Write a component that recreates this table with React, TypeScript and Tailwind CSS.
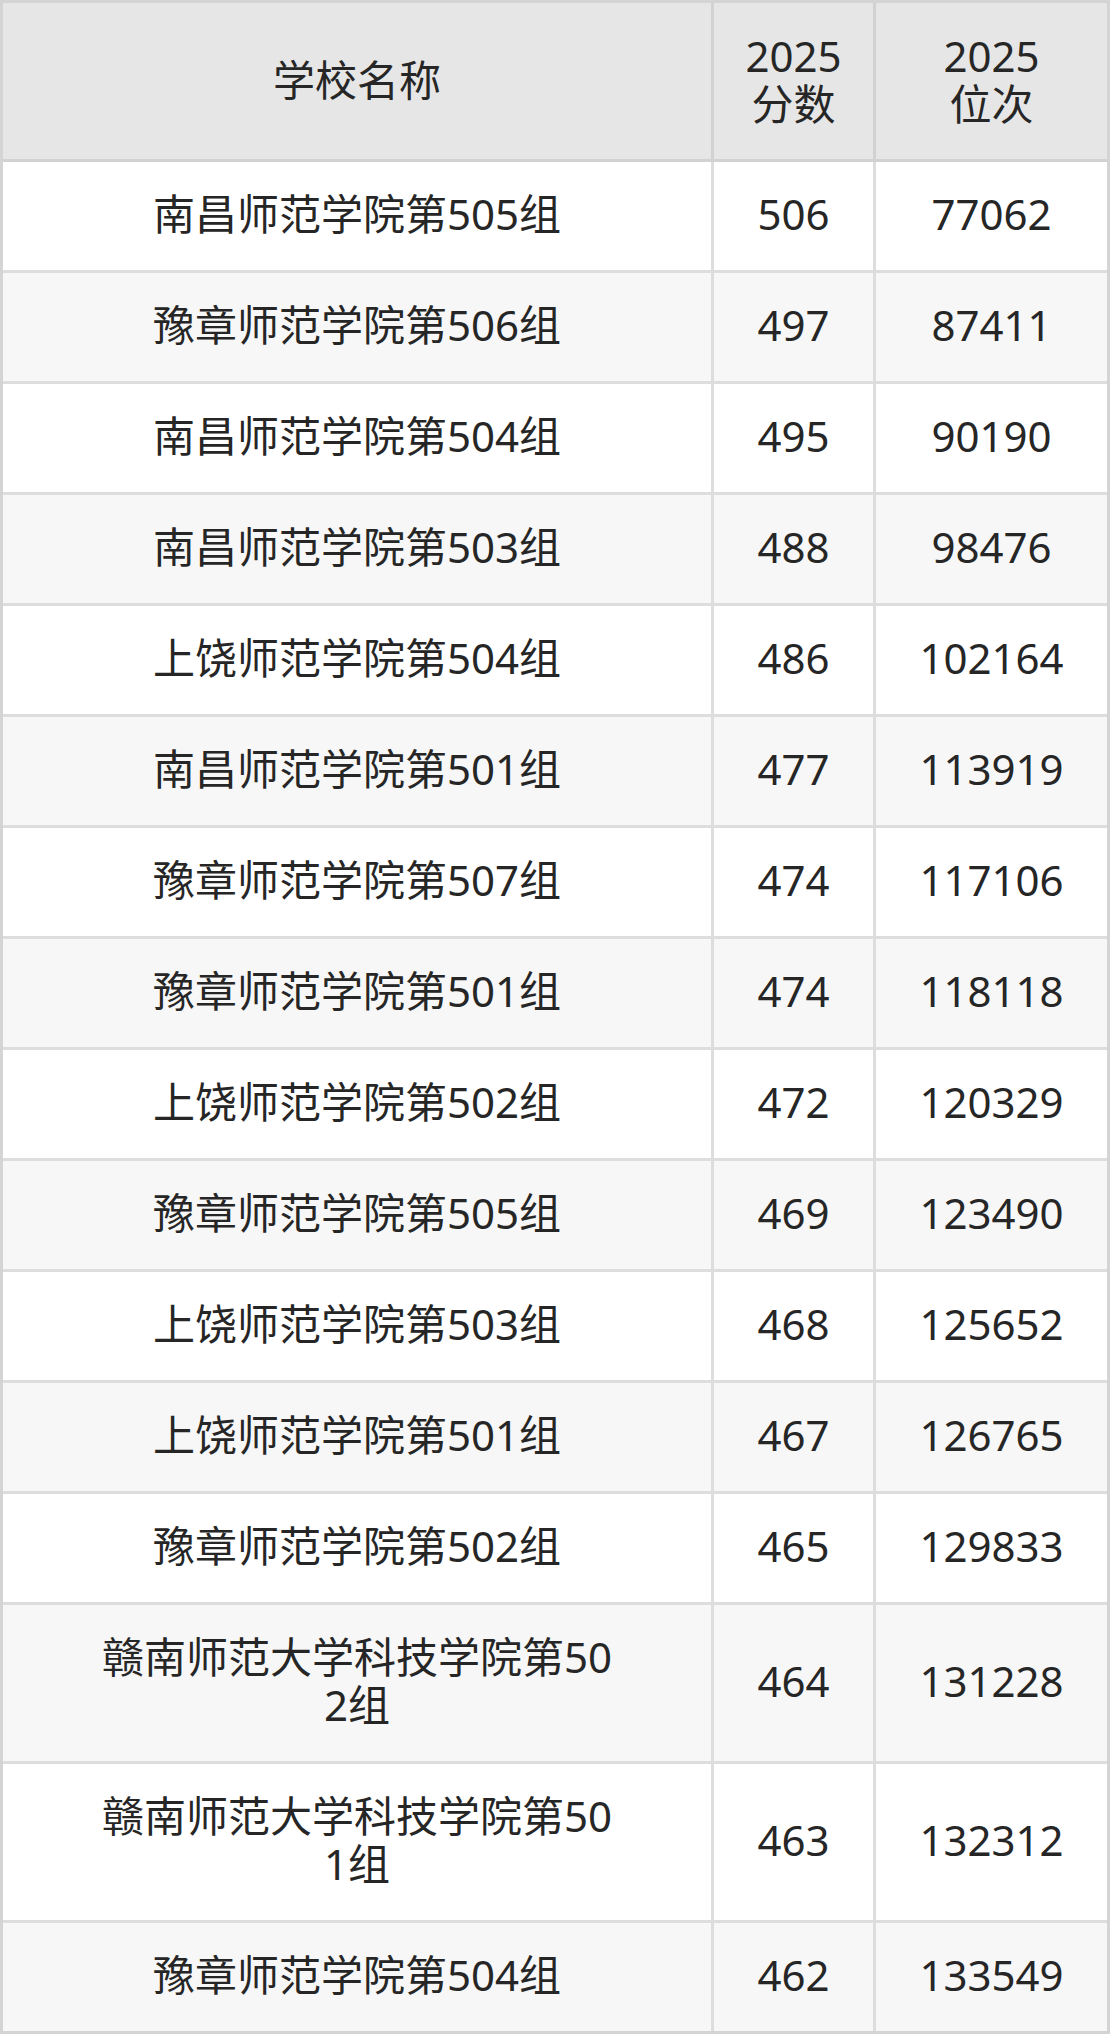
const rows: [string, number, number][] = [
  ["南昌师范学院第505组", 506, 77062],
  ["豫章师范学院第506组", 497, 87411],
  ["南昌师范学院第504组", 495, 90190],
  ["南昌师范学院第503组", 488, 98476],
  ["上饶师范学院第504组", 486, 102164],
  ["南昌师范学院第501组", 477, 113919],
  ["豫章师范学院第507组", 474, 117106],
  ["豫章师范学院第501组", 474, 118118],
  ["上饶师范学院第502组", 472, 120329],
  ["豫章师范学院第505组", 469, 123490],
  ["上饶师范学院第503组", 468, 125652],
  ["上饶师范学院第501组", 467, 126765],
  ["豫章师范学院第502组", 465, 129833],
  ["赣南师范大学科技学院第502组", 464, 131228],
  ["赣南师范大学科技学院第501组", 463, 132312],
  ["豫章师范学院第504组", 462, 133549],
];

export default function App() {
  return (
    <div
      className="w-[1110px] border-[3px] border-[#d4d4d4] bg-white text-[42px] leading-[48px] text-[#262626]"
      style={{ fontFamily: '"Noto Sans", "Noto Sans CJK SC", sans-serif' }}
    >
      {/* header */}
      <div className="flex bg-[#e6e6e6] border-b-[3px] border-[#d2d2d2]">
        <div className="w-[711px] shrink-0 flex items-center justify-center pt-[29px] pb-[31px] border-r-[3px] border-[#d2d2d2]">
          学校名称
        </div>
        <div className="w-[162px] shrink-0 flex flex-col items-center justify-center pt-[29px] pb-[31px] border-r-[3px] border-[#d2d2d2] text-center">
          <span>2025</span>
          <span>分数</span>
        </div>
        <div className="flex-1 flex flex-col items-center justify-center pt-[29px] pb-[31px] text-center">
          <span>2025</span>
          <span>位次</span>
        </div>
      </div>

      {rows.map(([name, score, rank], i) => (
        <div
          key={i}
          className={`flex ${i % 2 === 1 ? "bg-[#f7f7f7]" : "bg-white"} ${
            i < rows.length - 1 ? "border-b-[3px] border-[#dddddd]" : ""
          }`}
        >
          <div className="w-[711px] shrink-0 flex items-center justify-center px-[95px] pt-[28px] pb-[32px] border-r-[3px] border-[#dddddd] text-center break-all">
            {name}
          </div>
          <div className="w-[162px] shrink-0 flex items-center justify-center pt-[28px] pb-[32px] border-r-[3px] border-[#dddddd]">
            {score}
          </div>
          <div className="flex-1 flex items-center justify-center pt-[28px] pb-[32px]">
            {rank}
          </div>
        </div>
      ))}
    </div>
  );
}
